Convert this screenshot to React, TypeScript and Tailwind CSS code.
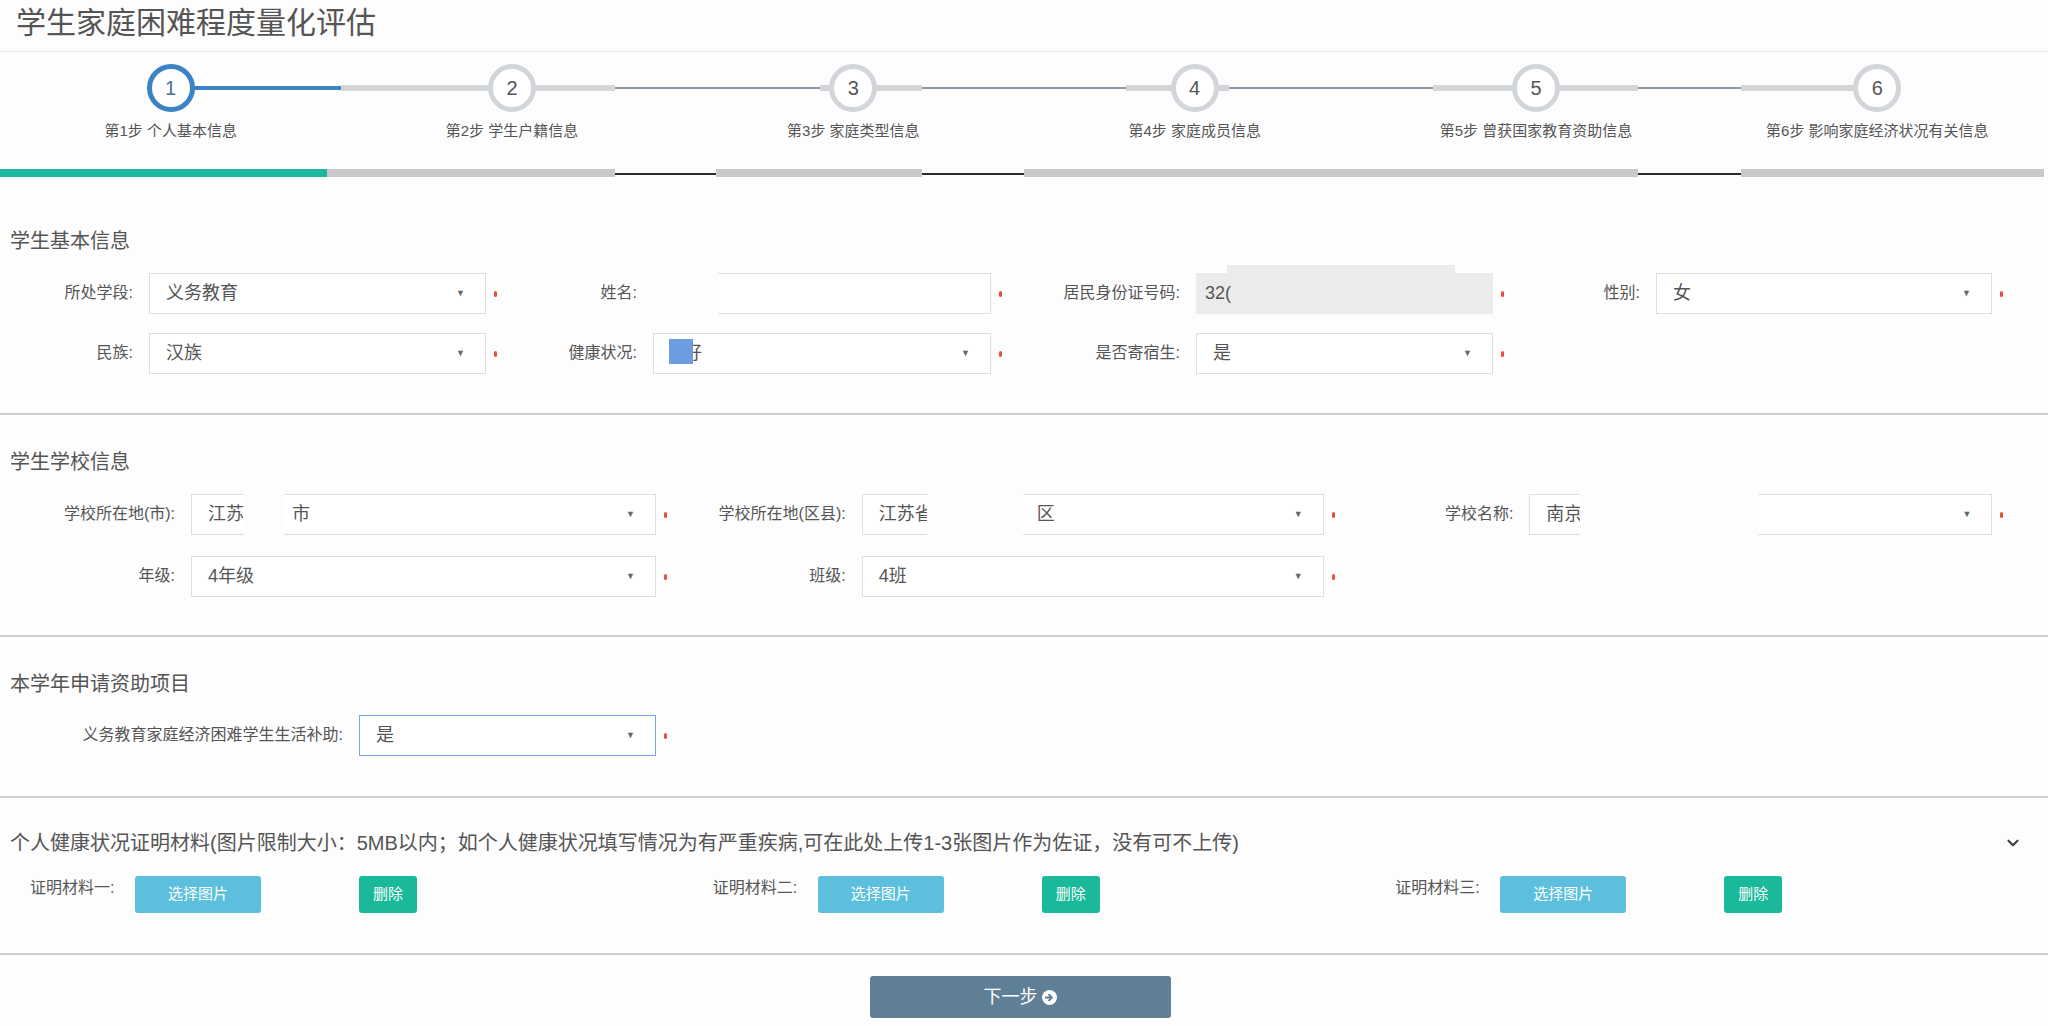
import { ChevronDown } from "lucide-react";

const STEPS = [
  "第1步 个人基本信息",
  "第2步 学生户籍信息",
  "第3步 家庭类型信息",
  "第4步 家庭成员信息",
  "第5步 曾获国家教育资助信息",
  "第6步 影响家庭经济状况有关信息",
];

// connector pieces between the step circles, left to right
const LINE = [
  { w: "w-[173px]", c: "h-[4px] bg-[#3c82c4]" },
  { w: "w-[274px]", c: "h-[6px] bg-[#d3d6d9]" },
  { w: "w-[205px]", c: "h-[2px] bg-[#8c98a2]" },
  { w: "w-[102px]", c: "h-[6px] bg-[#d3d6d9]" },
  { w: "w-[204px]", c: "h-[2px] bg-[#8c98a2]" },
  { w: "w-[103px]", c: "h-[6px] bg-[#d3d6d9]" },
  { w: "w-[204px]", c: "h-[2px] bg-[#8c98a2]" },
  { w: "w-[205px]", c: "h-[6px] bg-[#d3d6d9]" },
  { w: "w-[103px]", c: "h-[2px] bg-[#8c98a2]" },
  { w: "w-[132px]", c: "h-[6px] bg-[#d3d6d9]" },
];

const BAR = [
  { w: "w-[327px]", c: "h-[8px] bg-[#1eb8a0]" },
  { w: "w-[288px]", c: "h-[8px] bg-[#c9c9c9]" },
  { w: "w-[101px]", c: "h-[2px] bg-[#2a2a2a] mt-[4px]" },
  { w: "w-[206px]", c: "h-[8px] bg-[#c9c9c9]" },
  { w: "w-[102px]", c: "h-[2px] bg-[#2a2a2a] mt-[4px]" },
  { w: "w-[614px]", c: "h-[8px] bg-[#c9c9c9]" },
  { w: "w-[103px]", c: "h-[2px] bg-[#2a2a2a] mt-[4px]" },
  { w: "w-[303px]", c: "h-[8px] bg-[#c9c9c9]" },
];

function Dot() {
  return <span className="ml-[8px] inline-block w-[3px] h-[6px] rounded-full bg-[#e5513c]" />;
}

function Arrow() {
  return <span className="ml-auto text-[9px] text-[#666] leading-none">▼</span>;
}

function Label({ w, text }: { w: string; text: string }) {
  return (
    <div className={`${w} shrink-0 text-right text-[16px] text-[#555] pr-[16px] -mt-[2px]`}>
      {text}
    </div>
  );
}

function Box({
  w,
  children,
  tone = "bg-white border-[#dedede] pl-[16px]",
}: {
  w: string;
  children?: React.ReactNode;
  tone?: string;
}) {
  return (
    <div className={`${w} ${tone} relative h-[41px] flex items-center border pr-[20px] text-[18px] text-[#555]`}>
      {children}
    </div>
  );
}

function Heading({ text }: { text: string }) {
  return <div className="pl-[10px] h-[28px] flex items-center text-[20px] text-[#555]">{text}</div>;
}

function Divider({ mt }: { mt: string }) {
  return <div className={`${mt} h-[2px] bg-[#cdcdcd]`} />;
}

function Upload({ label }: { label: string }) {
  return (
    <div className="flex items-start">
      <div className="w-[135px] shrink-0 pl-[30px] text-[16px] text-[#555]">{label}</div>
      <button className="w-[126px] h-[37px] rounded-[3px] bg-[#5bbfdd] text-white text-[15px]">选择图片</button>
      <button className="ml-[98px] w-[58px] h-[37px] rounded-[3px] bg-[#1ab99a] text-white text-[15px]">删除</button>
    </div>
  );
}

export default function App() {
  return (
    <div className="w-[2048px] h-[1026px] bg-[#fdfdfd] font-['Liberation_Sans','Noto_Sans_CJK_SC',sans-serif] overflow-hidden">
      {/* title */}
      <div className="h-[52px] flex items-center pb-[6px] pl-[16px] text-[30px] text-[#555] border-b border-[#e6e6e6]">
        学生家庭困难程度量化评估
      </div>

      {/* steps */}
      <div className="relative mt-[12px]">
        <div className="absolute inset-x-0 top-0 h-[48px] flex items-center pl-[168px]">
          {LINE.map((s, i) => (
            <div key={i} className={`${s.w} ${s.c}`} />
          ))}
        </div>
        <div className="relative grid grid-cols-6">
          {STEPS.map((t, i) => (
            <div key={t} className="flex flex-col items-center">
              <div
                className={`w-[48px] h-[48px] rounded-full border-[5px] bg-white flex items-center justify-center text-[20px] ${
                  i === 0 ? "border-[#3c82c4] text-[#4a6f94]" : "border-[#d2d5d9] text-[#555]"
                }`}
              >
                {i + 1}
              </div>
              <div className="mt-[9px] h-[20px] leading-[20px] text-[15px] text-[#555]">{t}</div>
            </div>
          ))}
        </div>
      </div>

      {/* progress */}
      <div className="mt-[28px] flex items-start h-[8px]">
        {BAR.map((s, i) => (
          <div key={i} className={`${s.w} ${s.c}`} />
        ))}
      </div>

      {/* 学生基本信息 */}
      <div className="mt-[50px]">
        <Heading text="学生基本信息" />
      </div>
      <div className="mt-[18px] grid grid-cols-4 gap-y-[19px]">
        <div className="flex items-center">
          <Label w="w-[149px]" text="所处学段:" />
          <Box w="w-[337px]">义务教育<Arrow /></Box>
          <Dot />
        </div>
        <div className="flex items-center">
          <Label w="w-[141px]" text="姓名:" />
          <Box w="w-[338px]">
            <div className="absolute -left-[2px] -top-[2px] w-[66px] h-[44px] bg-[#fdfdfd]" />
          </Box>
          <Dot />
        </div>
        <div className="flex items-center">
          <Label w="w-[172px]" text="居民身份证号码:" />
          <Box w="w-[297px]" tone="bg-[#ebebeb] border-[#ebebeb] pl-[8px]">
            <div className="absolute left-[30px] -top-[9px] w-[228px] h-[10px] bg-[#ebebeb]" />
            32(
          </Box>
          <Dot />
        </div>
        <div className="flex items-center">
          <Label w="w-[120px]" text="性别:" />
          <Box w="w-[336px]">女<Arrow /></Box>
          <Dot />
        </div>

        <div className="flex items-center">
          <Label w="w-[149px]" text="民族:" />
          <Box w="w-[337px]">汉族<Arrow /></Box>
          <Dot />
        </div>
        <div className="flex items-center">
          <Label w="w-[141px]" text="健康状况:" />
          <Box w="w-[338px]">
            <span className="relative ml-[14px]">
              好
              <span className="absolute -left-[15px] -top-[1px] w-[24px] h-[25px] bg-[#6d9de0]" />
            </span>
            <Arrow />
          </Box>
          <Dot />
        </div>
        <div className="flex items-center">
          <Label w="w-[172px]" text="是否寄宿生:" />
          <Box w="w-[297px]">是<Arrow /></Box>
          <Dot />
        </div>
        <div />
      </div>

      <Divider mt="mt-[39px]" />

      {/* 学生学校信息 */}
      <div className="mt-[33px]">
        <Heading text="学生学校信息" />
      </div>
      <div className="mt-[18px] grid grid-cols-3 gap-y-[21px]">
        <div className="flex items-center">
          <Label w="w-[191px]" text="学校所在地(市):" />
          <Box w="w-[465px]">
            江苏
            <span className="absolute left-[52px] -top-[4px] w-[40px] h-[90px] bg-[#fdfdfd]" />
            <span className="ml-[48px]">市</span>
            <Arrow />
          </Box>
          <Dot />
        </div>
        <div className="flex items-center">
          <Label w="w-[179px]" text="学校所在地(区县):" />
          <Box w="w-[462px]">
            江苏省
            <span className="absolute left-[64px] -top-[3px] w-[96px] h-[46px] bg-[#fdfdfd]" />
            <span className="ml-[104px]">区</span>
            <Arrow />
          </Box>
          <Dot />
        </div>
        <div className="flex items-center">
          <Label w="w-[164px]" text="学校名称:" />
          <Box w="w-[463px]">
            南京
            <span className="absolute left-[50px] -top-[3px] w-[178px] h-[46px] bg-[#fdfdfd]" />
            <Arrow />
          </Box>
          <Dot />
        </div>

        <div className="flex items-center">
          <Label w="w-[191px]" text="年级:" />
          <Box w="w-[465px]">4年级<Arrow /></Box>
          <Dot />
        </div>
        <div className="flex items-center">
          <Label w="w-[179px]" text="班级:" />
          <Box w="w-[462px]">4班<Arrow /></Box>
          <Dot />
        </div>
        <div />
      </div>

      <Divider mt="mt-[38px]" />

      {/* 本学年申请资助项目 */}
      <div className="mt-[33px]">
        <Heading text="本学年申请资助项目" />
      </div>
      <div className="mt-[17px] flex items-center">
        <Label w="w-[359px]" text="义务教育家庭经济困难学生生活补助:" />
        <Box w="w-[297px]" tone="bg-white border-[#72a9e0] pl-[16px]">是<Arrow /></Box>
        <Dot />
      </div>

      <Divider mt="mt-[40px]" />

      {/* 证明材料 */}
      <div className="mt-[31px] flex items-center pr-[26px]">
        <Heading text="个人健康状况证明材料(图片限制大小：5MB以内；如个人健康状况填写情况为有严重疾病,可在此处上传1-3张图片作为佐证，没有可不上传)" />
        <ChevronDown className="ml-auto w-[18px] h-[18px] text-[#444]" strokeWidth={3} />
      </div>
      <div className="mt-[19px] grid grid-cols-3">
        <Upload label="证明材料一:" />
        <Upload label="证明材料二:" />
        <Upload label="证明材料三:" />
      </div>

      <Divider mt="mt-[40px]" />

      <div className="mt-[21px] flex justify-center pr-[8px]">
        <button className="w-[301px] h-[42px] rounded-[3px] bg-[#5f7f96] text-white text-[18px] flex items-center justify-center gap-[4px]">
          下一步
          <svg viewBox="0 0 16 16" className="w-[15px] h-[15px]">
            <circle cx="8" cy="8" r="8" fill="#fff" />
            <path d="M4 8h6M7.5 5l3 3-3 3" stroke="#5f7f96" strokeWidth="2" fill="none" strokeLinecap="round" strokeLinejoin="round" />
          </svg>
        </button>
      </div>
    </div>
  );
}
